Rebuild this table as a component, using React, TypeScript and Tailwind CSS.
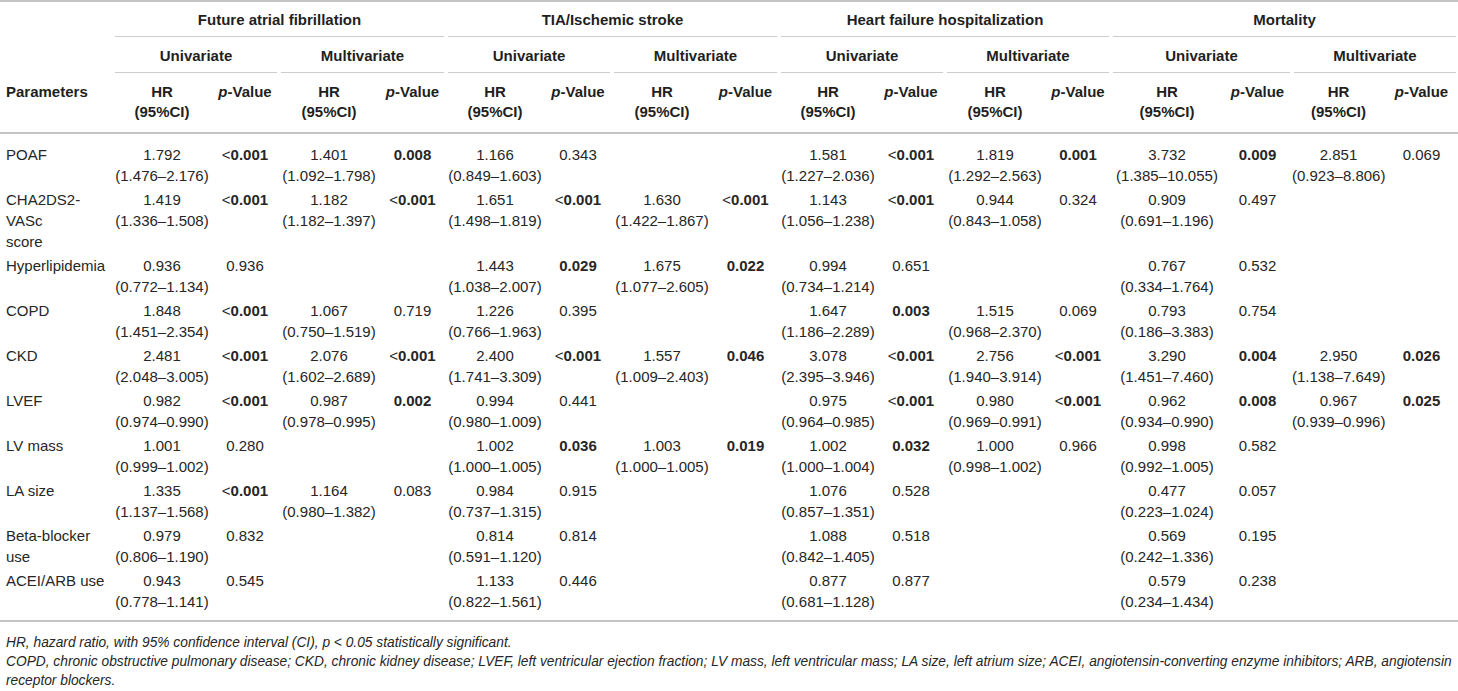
type Cell = { v?: string; ci?: string; p?: string; sig?: boolean };

type Row = { label: string[]; cells: Cell[] };

const cols =
  'grid grid-cols-[113px_98px_68px_100px_67px_98px_68px_100px_67px_98px_68px_100px_66px_112px_69px_93px_73px]';

const E: Cell = {};

const rows: Row[] = [
  {
    label: ['POAF'],
    cells: [
      { v: '1.792', ci: '1.476–2.176', p: '<0.001', sig: true },
      { v: '1.401', ci: '1.092–1.798', p: '0.008', sig: true },
      { v: '1.166', ci: '0.849–1.603', p: '0.343' },
      E,
      { v: '1.581', ci: '1.227–2.036', p: '<0.001', sig: true },
      { v: '1.819', ci: '1.292–2.563', p: '0.001', sig: true },
      { v: '3.732', ci: '1.385–10.055', p: '0.009', sig: true },
      { v: '2.851', ci: '0.923–8.806', p: '0.069' },
    ],
  },
  {
    label: ['CHA2DS2-', 'VASc', 'score'],
    cells: [
      { v: '1.419', ci: '1.336–1.508', p: '<0.001', sig: true },
      { v: '1.182', ci: '1.182–1.397', p: '<0.001', sig: true },
      { v: '1.651', ci: '1.498–1.819', p: '<0.001', sig: true },
      { v: '1.630', ci: '1.422–1.867', p: '<0.001', sig: true },
      { v: '1.143', ci: '1.056–1.238', p: '<0.001', sig: true },
      { v: '0.944', ci: '0.843–1.058', p: '0.324' },
      { v: '0.909', ci: '0.691–1.196', p: '0.497' },
      E,
    ],
  },
  {
    label: ['Hyperlipidemia'],
    cells: [
      { v: '0.936', ci: '0.772–1.134', p: '0.936' },
      E,
      { v: '1.443', ci: '1.038–2.007', p: '0.029', sig: true },
      { v: '1.675', ci: '1.077–2.605', p: '0.022', sig: true },
      { v: '0.994', ci: '0.734–1.214', p: '0.651' },
      E,
      { v: '0.767', ci: '0.334–1.764', p: '0.532' },
      E,
    ],
  },
  {
    label: ['COPD'],
    cells: [
      { v: '1.848', ci: '1.451–2.354', p: '<0.001', sig: true },
      { v: '1.067', ci: '0.750–1.519', p: '0.719' },
      { v: '1.226', ci: '0.766–1.963', p: '0.395' },
      E,
      { v: '1.647', ci: '1.186–2.289', p: '0.003', sig: true },
      { v: '1.515', ci: '0.968–2.370', p: '0.069' },
      { v: '0.793', ci: '0.186–3.383', p: '0.754' },
      E,
    ],
  },
  {
    label: ['CKD'],
    cells: [
      { v: '2.481', ci: '2.048–3.005', p: '<0.001', sig: true },
      { v: '2.076', ci: '1.602–2.689', p: '<0.001', sig: true },
      { v: '2.400', ci: '1.741–3.309', p: '<0.001', sig: true },
      { v: '1.557', ci: '1.009–2.403', p: '0.046', sig: true },
      { v: '3.078', ci: '2.395–3.946', p: '<0.001', sig: true },
      { v: '2.756', ci: '1.940–3.914', p: '<0.001', sig: true },
      { v: '3.290', ci: '1.451–7.460', p: '0.004', sig: true },
      { v: '2.950', ci: '1.138–7.649', p: '0.026', sig: true },
    ],
  },
  {
    label: ['LVEF'],
    cells: [
      { v: '0.982', ci: '0.974–0.990', p: '<0.001', sig: true },
      { v: '0.987', ci: '0.978–0.995', p: '0.002', sig: true },
      { v: '0.994', ci: '0.980–1.009', p: '0.441' },
      E,
      { v: '0.975', ci: '0.964–0.985', p: '<0.001', sig: true },
      { v: '0.980', ci: '0.969–0.991', p: '<0.001', sig: true },
      { v: '0.962', ci: '0.934–0.990', p: '0.008', sig: true },
      { v: '0.967', ci: '0.939–0.996', p: '0.025', sig: true },
    ],
  },
  {
    label: ['LV mass'],
    cells: [
      { v: '1.001', ci: '0.999–1.002', p: '0.280' },
      E,
      { v: '1.002', ci: '1.000–1.005', p: '0.036', sig: true },
      { v: '1.003', ci: '1.000–1.005', p: '0.019', sig: true },
      { v: '1.002', ci: '1.000–1.004', p: '0.032', sig: true },
      { v: '1.000', ci: '0.998–1.002', p: '0.966' },
      { v: '0.998', ci: '0.992–1.005', p: '0.582' },
      E,
    ],
  },
  {
    label: ['LA size'],
    cells: [
      { v: '1.335', ci: '1.137–1.568', p: '<0.001', sig: true },
      { v: '1.164', ci: '0.980–1.382', p: '0.083' },
      { v: '0.984', ci: '0.737–1.315', p: '0.915' },
      E,
      { v: '1.076', ci: '0.857–1.351', p: '0.528' },
      E,
      { v: '0.477', ci: '0.223–1.024', p: '0.057' },
      E,
    ],
  },
  {
    label: ['Beta-blocker', 'use'],
    cells: [
      { v: '0.979', ci: '0.806–1.190', p: '0.832' },
      E,
      { v: '0.814', ci: '0.591–1.120', p: '0.814' },
      E,
      { v: '1.088', ci: '0.842–1.405', p: '0.518' },
      E,
      { v: '0.569', ci: '0.242–1.336', p: '0.195' },
      E,
    ],
  },
  {
    label: ['ACEI/ARB use'],
    cells: [
      { v: '0.943', ci: '0.778–1.141', p: '0.545' },
      E,
      { v: '1.133', ci: '0.822–1.561', p: '0.446' },
      E,
      { v: '0.877', ci: '0.681–1.128', p: '0.877' },
      E,
      { v: '0.579', ci: '0.234–1.434', p: '0.238' },
      E,
    ],
  },
];

const groups = ['Future atrial fibrillation', 'TIA/Ischemic stroke', 'Heart failure hospitalization', 'Mortality'];

function PValue({ p, sig }: { p?: string; sig?: boolean }) {
  if (!p) return null;
  if (!sig) return <>{p}</>;
  if (p.startsWith('<')) {
    return (
      <>
        <span className="font-normal">&lt;</span>
        <span className="font-bold">{p.slice(1)}</span>
      </>
    );
  }
  return <span className="font-bold">{p}</span>;
}

function PHead() {
  return (
    <>
      <i>p</i>-Value
    </>
  );
}

export default function App() {
  return (
    <div className="w-[1458px] h-[691px] bg-white text-[#262626] font-['Liberation_Sans',Arial,sans-serif] text-[15px] leading-[20px] overflow-hidden">
      {/* 表头 */}
      <div className={`${cols} border-t-2 border-b-2 border-[#c4c4c4] font-bold text-[#1f1f1f]`}>
        <div />
        {groups.map(g => (
          <div key={g} className="col-span-4 mx-[2px] last:mr-0 border-b border-[#cccccc] pt-[8px] pb-[6px] text-center whitespace-nowrap">
            {g}
          </div>
        ))}

        <div />
        {Array.from({ length: 8 }).map((_, i) => (
          <div key={i} className="col-span-2 mx-[2px] last:mr-0 border-b border-[#cccccc] pt-[9px] pb-[6px] text-center">
            {i % 2 === 0 ? 'Univariate' : 'Multivariate'}
          </div>
        ))}

        <div className="pl-[6px] pt-[9px] pb-[10px] whitespace-nowrap">Parameters</div>
        {Array.from({ length: 8 }).map((_, i) => (
          <div key={i} className="contents">
            <div className="pt-[9px] pb-[10px] text-center">
              HR
              <br />
              (95%CI)
            </div>
            <div className="pt-[9px] pb-[10px] text-center whitespace-nowrap">
              <PHead />
            </div>
          </div>
        ))}
      </div>

      {/* 表体 */}
      <div className={`${cols} pt-[9px] pb-[6px] leading-[21px] border-b-2 border-[#c4c4c4]`}>
        {rows.map(row => (
          <div key={row.label.join(' ')} className="contents">
            <div className="pl-[6px] pt-[1px] pb-[2px] whitespace-nowrap">
              {row.label.map((l, i) => (
                <div key={i}>{l}</div>
              ))}
            </div>
            {row.cells.map((c, i) => (
              <div key={i} className="contents">
                <div className="pt-[1px] pb-[2px] text-center whitespace-nowrap">
                  {c.v && (
                    <>
                      <div>{c.v}</div>
                      <div>({c.ci})</div>
                    </>
                  )}
                </div>
                <div className="pt-[1px] pb-[2px] text-center whitespace-nowrap">
                  <PValue p={c.p} sig={c.sig} />
                </div>
              </div>
            ))}
          </div>
        ))}
      </div>

      {/* 脚注 */}
      <div className="pl-[6px] pt-[11px] text-[13.75px] leading-[19px] italic text-[#262626] whitespace-nowrap">
        <div>HR, hazard ratio, with 95% confidence interval (CI), p &lt; 0.05 statistically significant.</div>
        <div>
          COPD, chronic obstructive pulmonary disease; CKD, chronic kidney disease; LVEF, left ventricular ejection fraction; LV
          mass, left ventricular mass; LA size, left atrium size; ACEI, angiotensin-converting enzyme inhibitors; ARB, angiotensin
        </div>
        <div>receptor blockers.</div>
      </div>
    </div>
  );
}
